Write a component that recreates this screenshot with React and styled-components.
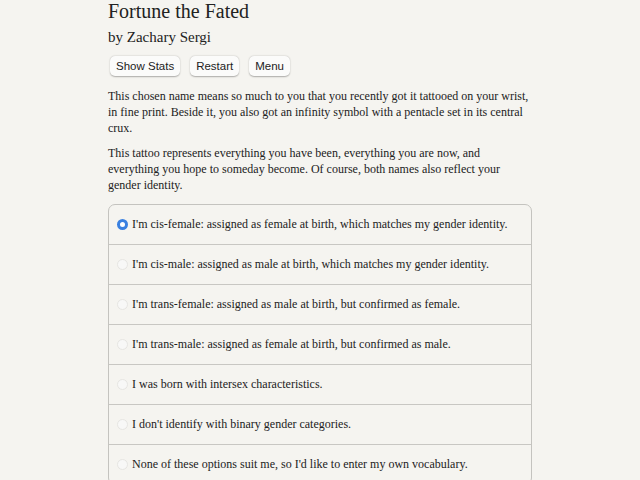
import React, { useState } from "react";
import styled, { createGlobalStyle } from "styled-components";

const GlobalStyle = createGlobalStyle`
  html, body {
    margin: 0;
    padding: 0;
    background: #f5f4f0;
  }
  body {
    font-family: "Liberation Serif", "Times New Roman", serif;
    color: #222;
  }
`;

const Page = styled.div`
  width: 424px;
  margin-left: 108px;
`;

const Title = styled.h1`
  margin: 0;
  font-size: 20px;
  font-weight: normal;
  line-height: 22px;
`;

const Byline = styled.h2`
  margin: 6px 0 0;
  font-size: 15px;
  font-weight: normal;
  line-height: 18px;
`;

const Toolbar = styled.div`
  display: flex;
  gap: 10px;
  margin: 10px 0 0 2px;
`;

const Button = styled.button`
  font-family: "Liberation Sans", Arial, sans-serif;
  font-size: 11.5px;
  color: #222;
  height: 20px;
  padding: 0 6px;
  background: #fbfbfa;
  border: none;
  border-radius: 5px;
  box-shadow: 0 0.5px 1.5px rgba(0, 0, 0, 0.3);
`;

const Text = styled.p`
  margin: ${(p) => p.$top || 0}px 0 0;
  font-size: 12px;
  line-height: 16px;
`;

const Choices = styled.div`
  margin-top: 11px;
  border: 1.5px solid #c4c3bf;
  border-radius: 7px;
  overflow: hidden;
`;

const Option = styled.label`
  display: flex;
  align-items: center;
  gap: 4px;
  height: 39px;
  padding-left: 8px;
  font-size: 12px;
  border-top: ${(p) => (p.$first ? "none" : "1.5px solid #c8c7c3")};
`;

const Radio = styled.span`
  width: 11px;
  height: 11px;
  flex: none;
  border-radius: 50%;
  box-sizing: border-box;
  background: ${(p) => (p.$on ? "#fff" : "#f8f8f7")};
  border: ${(p) => (p.$on ? "3px solid #3a80e0" : "1px solid #e6e5e2")};
`;

const options = [
  "I'm cis-female: assigned as female at birth, which matches my gender identity.",
  "I'm cis-male: assigned as male at birth, which matches my gender identity.",
  "I'm trans-female: assigned as male at birth, but confirmed as female.",
  "I'm trans-male: assigned as female at birth, but confirmed as male.",
  "I was born with intersex characteristics.",
  "I don't identify with binary gender categories.",
  "None of these options suit me, so I'd like to enter my own vocabulary.",
];

export default function App() {
  const [picked, setPicked] = useState(0);
  return (
    <Page>
      <GlobalStyle />
      <Title>Fortune the Fated</Title>
      <Byline>by Zachary Sergi</Byline>
      <Toolbar>
        <Button>Show Stats</Button>
        <Button>Restart</Button>
        <Button>Menu</Button>
      </Toolbar>
      <Text $top={12}>
        This chosen name means so much to you that you recently got it tattooed on your wrist,
        in fine print. Beside it, you also got an infinity symbol with a pentacle set in its central
        crux.
      </Text>
      <Text $top={9}>
        This tattoo represents everything you have been, everything you are now, and
        everything you hope to someday become. Of course, both names also reflect your
        gender identity.
      </Text>
      <Choices>
        {options.map((o, i) => (
          <Option key={i} $first={i === 0} onClick={() => setPicked(i)}>
            <Radio $on={picked === i} />
            {o}
          </Option>
        ))}
      </Choices>
    </Page>
  );
}
